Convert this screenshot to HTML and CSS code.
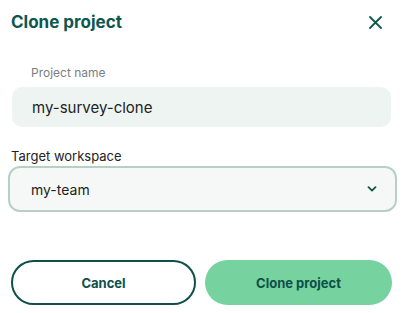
FILE: index.html
```html
<!DOCTYPE html>
<html lang="en">
<head>
    <meta charset="UTF-8">
    <meta name="viewport" content="width=device-width, initial-scale=1.0">
    <title>Clone project</title>
    <link rel="stylesheet" href="styles.css">
</head>
<body>
    <div class="dialog">
        <div class="dialog-header">
            <h1>Clone project</h1>
            <button class="close" aria-label="Close">
                <svg width="13" height="13" viewBox="0 0 13 13">
                    <path d="M1 1 L12 12 M12 1 L1 12" stroke="#0f564d" stroke-width="1.8" stroke-linecap="round" fill="none"/>
                </svg>
            </button>
        </div>

        <div class="field field-inset">
            <label class="label-muted">Project name</label>
            <div class="input">my-survey-clone</div>
        </div>

        <div class="field">
            <label class="label">Target workspace</label>
            <div class="select">
                <span>my-team</span>
                <svg width="10" height="6" viewBox="0 0 10 6">
                    <path d="M1.5 1.2 L5 4.6 L8.5 1.2" stroke="#0f564d" stroke-width="1.8" stroke-linecap="round" stroke-linejoin="round" fill="none"/>
                </svg>
            </div>
        </div>

        <div class="actions">
            <button class="btn btn-outline">Cancel</button>
            <button class="btn btn-primary">Clone project</button>
        </div>
    </div>
</body>
</html>
```

FILE: styles.css
```css
body {
    margin: 0;
    font-family: Inter, 'Noto Sans', sans-serif;
    background-color: #fff;
    color: #222;
}
.dialog {
    width: 405px;
    height: 313px;
    box-sizing: border-box;
    padding: 11px 11px 0 11px;
}
.dialog-header {
    display: flex;
    justify-content: space-between;
    align-items: center;
    height: 22px;
}
h1 {
    margin: 0;
    font-size: 17px;
    font-weight: 700;
    line-height: 22px;
    color: #0e5650;
}
.close {
    border: none;
    background: none;
    padding: 0;
    margin-right: 12px;
    display: flex;
    width: 13px;
    height: 13px;
}
.field {
    display: flex;
    flex-direction: column;
}
.field-inset {
    margin-top: 32px;
    padding-left: 1px;
    padding-right: 3px;
}
.label-muted {
    font-size: 12px;
    line-height: 16px;
    color: #7a7f80;
    padding-left: 19px;
    margin-bottom: 6px;
}
.input {
    height: 40px;
    border-radius: 10px;
    background-color: #eef4f1;
    display: flex;
    align-items: center;
    padding-left: 20px;
    font-size: 15px;
    color: #222;
}
.field + .field {
    margin-top: 21px;
}
.label {
    font-size: 13px;
    line-height: 16px;
    color: #222;
    margin-bottom: 2px;
}
.select {
    height: 46px;
    box-sizing: border-box;
    margin-left: -3px;
    margin-right: -3px;
    border: 2.5px solid #b7d0c7;
    border-radius: 12px;
    background-color: #f5f8f7;
    display: flex;
    align-items: center;
    justify-content: space-between;
    padding: 0 18px 0 21px;
    font-size: 14px;
}
.actions {
    display: flex;
    gap: 9px;
    margin-top: 48px;
    padding-right: 2px;
}
.btn {
    height: 45px;
    border-radius: 23px;
    font-family: Inter, 'Noto Sans', sans-serif;
    font-size: 13px;
    font-weight: 700;
    color: #0e5049;
    cursor: pointer;
}
.btn-outline {
    width: 185px;
    background-color: #fff;
    border: 2px solid #0e5049;
}
.btn-primary {
    flex: 1;
    background-color: #76d29e;
    border: none;
}
```
